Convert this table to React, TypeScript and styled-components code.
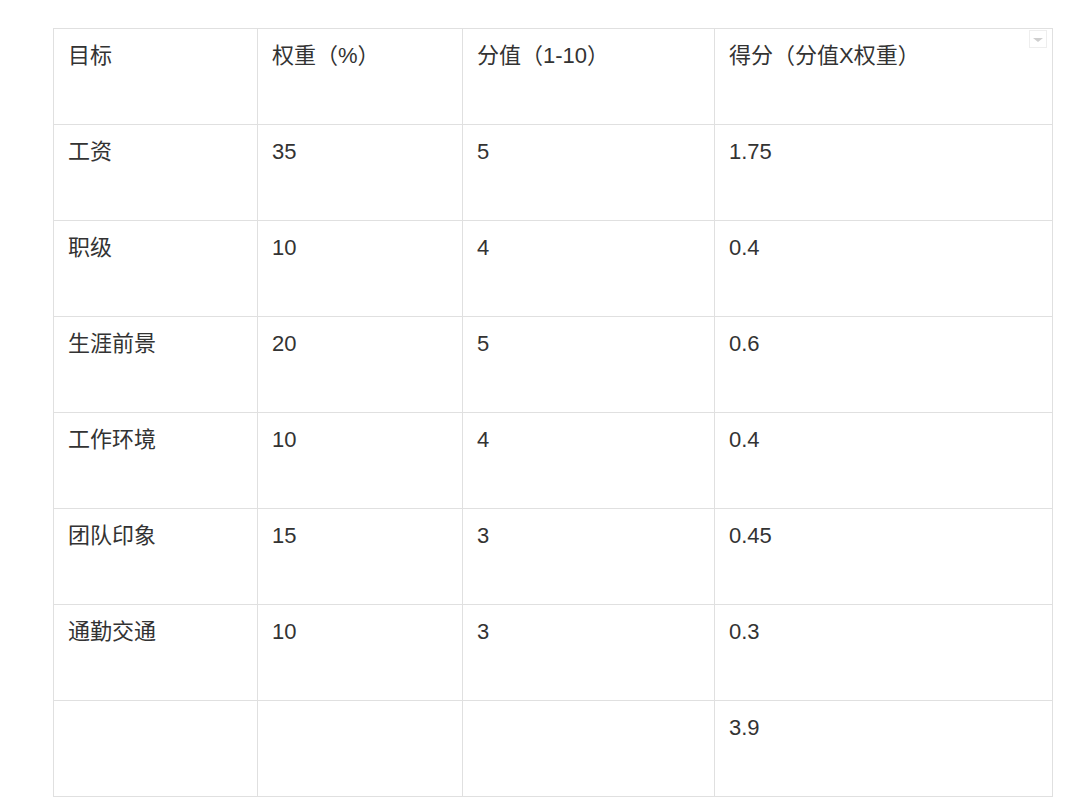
import styled, { createGlobalStyle } from 'styled-components';

const GlobalStyle = createGlobalStyle`
  html, body {
    margin: 0;
    padding: 0;
    background: #fff;
  }
`;

const Page = styled.div`
  padding: 28px 0 0 53px;
  font-family: "Liberation Sans", "Noto Sans CJK SC", sans-serif;
  color: #333;
  text-spacing-trim: space-all;
`;

const Table = styled.table`
  border-collapse: collapse;
  table-layout: fixed;
  width: 999px;
`;

const Row = styled.tr`
  height: 96px;
`;

const Cell = styled.td`
  position: relative;
  border: 1px solid #e0e0e0;
  vertical-align: top;
  padding: 10px 14px 0 14px;
  font-size: 22px;
  line-height: 33px;
  box-sizing: border-box;
`;

const DropBox = styled.span`
  position: absolute;
  top: 1px;
  right: 5px;
  width: 18px;
  height: 18px;
  border: 1px solid #eeeeee;
  box-sizing: border-box;
  display: flex;
  align-items: center;
  justify-content: center;
  &::after {
    content: '';
    border-left: 5px solid transparent;
    border-right: 5px solid transparent;
    border-top: 4px solid #cfcfcf;
    margin-top: 2px;
  }
`;

const widths = [204, 205, 252, 338];

const head = ['目标', '权重（%）', '分值（1-10）', '得分（分值X权重）'];

const rows: string[][] = [
  ['工资', '35', '5', '1.75'],
  ['职级', '10', '4', '0.4'],
  ['生涯前景', '20', '5', '0.6'],
  ['工作环境', '10', '4', '0.4'],
  ['团队印象', '15', '3', '0.45'],
  ['通勤交通', '10', '3', '0.3'],
  ['', '', '', '3.9'],
];

export default function App() {
  return (
    <>
      <GlobalStyle />
      <Page>
        <Table>
          <colgroup>
            {widths.map((w, i) => (
              <col key={i} style={{ width: w }} />
            ))}
          </colgroup>
          <tbody>
            <Row>
              {head.map((h, i) => (
                <Cell key={i}>
                  {h}
                  {i === head.length - 1 && <DropBox />}
                </Cell>
              ))}
            </Row>
            {rows.map((r, ri) => (
              <Row key={ri}>
                {r.map((c, ci) => (
                  <Cell key={ci}>{c}</Cell>
                ))}
              </Row>
            ))}
          </tbody>
        </Table>
      </Page>
    </>
  );
}
